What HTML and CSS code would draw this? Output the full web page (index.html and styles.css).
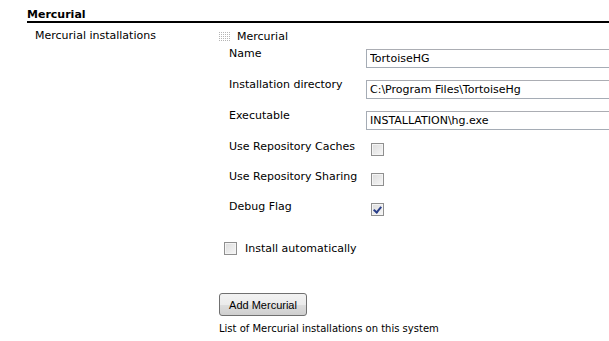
FILE: index.html
```html
<!DOCTYPE html>
<html lang="en">
<head>
    <meta charset="UTF-8">
    <title>Mercurial</title>
    <link rel="stylesheet" href="styles.css">
</head>
<body>
    <div class="section-header">Mercurial</div>

    <div class="setting">
        <div class="setting-name">Mercurial installations</div>
        <div class="setting-main">
            <div class="repeated">
                <div class="repeated-head">
                    <svg class="grip" width="11" height="9" viewBox="0 0 11 9">
                        <defs>
                            <pattern id="dots" width="2" height="2" patternUnits="userSpaceOnUse">
                                <rect width="1" height="1" fill="#b5b5b5"/>
                            </pattern>
                        </defs>
                        <rect width="11" height="9" fill="url(#dots)"/>
                    </svg>
                    <span>Mercurial</span>
                </div>
                <div class="field">
                    <div class="field-name">Name</div>
                    <div class="field-value"><input class="text" type="text" value="TortoiseHG"></div>
                </div>
                <div class="field">
                    <div class="field-name">Installation directory</div>
                    <div class="field-value"><input class="text" type="text" value="C:\Program Files\TortoiseHg"></div>
                </div>
                <div class="field">
                    <div class="field-name">Executable</div>
                    <div class="field-value"><input class="text" type="text" value="INSTALLATION\hg.exe"></div>
                </div>
                <div class="field check-field">
                    <div class="field-name">Use Repository Caches</div>
                    <div class="field-value"><span class="box"></span></div>
                </div>
                <div class="field check-field">
                    <div class="field-name">Use Repository Sharing</div>
                    <div class="field-value"><span class="box"></span></div>
                </div>
                <div class="field check-field">
                    <div class="field-name">Debug Flag</div>
                    <div class="field-value"><span class="box checked"></span></div>
                </div>
                <div class="auto-install">
                    <span class="box"></span>
                    <span>Install automatically</span>
                </div>
            </div>

            <button class="add-btn">Add Mercurial</button>
            <div class="description">List of Mercurial installations on this system</div>
        </div>
    </div>
</body>
</html>
```

FILE: styles.css
```css
body {
    margin: 0;
    width: 609px;
    height: 341px;
    overflow: hidden;
    background: #fff;
    color: #000;
    font-family: "DejaVu Sans", Verdana, sans-serif;
    font-size: 11px;
}

.section-header {
    margin: 9px 0 0 27px;
    height: 12px;
    line-height: 12px;
    font-weight: bold;
    border-bottom: 2px solid #000;
}

.setting {
    display: flex;
}

.setting-name {
    width: 184px;
    padding: 6px 0 0 35px;
    flex-shrink: 0;
}

.setting-main {
    flex: 1;
    min-width: 0;
    overflow: hidden;
}

.repeated-head {
    display: flex;
    align-items: center;
    gap: 7px;
    height: 20px;
    margin-top: 3px;
}

.grip {
    display: block;
}

.field {
    display: flex;
    margin-left: 10px;
    height: 31px;
}

.field-name {
    width: 137px;
    flex-shrink: 0;
    padding-top: 1px;
}

.field-value {
    flex: 1;
    min-width: 0;
    overflow: hidden;
}

input.text {
    box-sizing: border-box;
    width: 300px;
    height: 19px;
    margin: 3px 0 0 0;
    padding: 0 3px;
    border: 1px solid #a5acb5;
    border-top-color: #abadb3;
    font-family: inherit;
    font-size: 11px;
    color: #000;
}

.check-field {
    height: 30px;
}

.check-field .field-value {
    padding: 4px 0 0 5px;
}

.box {
    display: inline-block;
    box-sizing: border-box;
    width: 13px;
    height: 13px;
    border: 1px solid #8f8f8f;
    background: linear-gradient(135deg, #dcdcdc, #f6f6f6);
    box-shadow: inset 0 0 0 1px #f4f4f4;
    position: relative;
}

.box.checked::after {
    content: "";
    position: absolute;
    left: 3px;
    top: 1px;
    width: 3px;
    height: 6px;
    border: solid #2a3f8a;
    border-width: 0 2px 2px 0;
    transform: rotate(40deg);
}

.auto-install {
    display: flex;
    align-items: center;
    gap: 8px;
    margin: 13px 0 0 5px;
}

.add-btn {
    display: block;
    margin-top: 38px;
    width: 88px;
    height: 23px;
    padding: 0;
    border: 1px solid #707070;
    border-radius: 3px;
    background: linear-gradient(#f2f2f2, #ebebeb 50%, #dddddd 51%, #cfcfcf);
    font-family: "Liberation Sans", Arial, sans-serif;
    font-size: 11px;
    color: #000;
}

.description {
    margin-top: 7px;
    font-size: 10px;
}
```
